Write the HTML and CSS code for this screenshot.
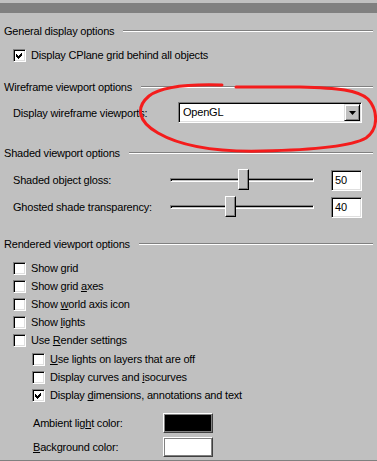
FILE: index.html
```html
<!DOCTYPE html>
<html lang="en">
    <head>
        <meta charset="UTF-8">
        <title>View options</title>
        <link rel="stylesheet" href="styles.css">
    </head>
    <body>
        <div class="panel">
            <div class="band"></div>

            <div class="group first"><span>General display options</span><i class="rule"></i></div>
            <div class="check cplane"><span class="box on"><svg width="9" height="9" viewBox="0 0 9 9"><polygon points="1,3 3,5 7,1 7,4 3,8 1,6"/></svg></span><span>Display CPlane grid behind all objects</span></div>

            <div class="group wire"><span>Wireframe viewport options</span><i class="rule"></i></div>
            <div class="combo-row">
                <span class="lbl">Display wireframe viewports:</span>
                <div class="combo"><span class="val">OpenGL</span><span class="drop"><svg width="7" height="4" viewBox="0 0 7 4"><polygon points="0,0 7,0 3.5,4"/></svg></span></div>
            </div>

            <div class="group shaded"><span>Shaded viewport options</span><i class="rule"></i></div>
            <div class="slider-row gloss">
                <span class="lbl">Shaded object gloss:</span>
                <div class="track"><span class="thumb" style="left:67px"></span></div>
                <span class="edit">50</span>
            </div>
            <div class="slider-row ghost">
                <span class="lbl">Ghosted shade transparency:</span>
                <div class="track"><span class="thumb" style="left:54px"></span></div>
                <span class="edit">40</span>
            </div>

            <div class="group rendered"><span>Rendered viewport options</span><i class="rule"></i></div>
            <div class="check top"><span class="box"></span><span>Show grid</span></div>
            <div class="check"><span class="box"></span><span>Show grid <u>a</u>xes</span></div>
            <div class="check"><span class="box"></span><span>Show <u>w</u>orld axis icon</span></div>
            <div class="check"><span class="box"></span><span>Show <u>l</u>ights</span></div>
            <div class="check"><span class="box"></span><span>Use <u>R</u>ender settings</span></div>
            <div class="check sub first-sub"><span class="box"></span><span><u>U</u>se lights on layers that are off</span></div>
            <div class="check sub"><span class="box"></span><span>Display curves and <u>i</u>socurves</span></div>
            <div class="check sub"><span class="box on"><svg width="9" height="9" viewBox="0 0 9 9"><polygon points="1,3 3,5 7,1 7,4 3,8 1,6"/></svg></span><span>Display <u>d</u>imensions, annotations and text</span></div>

            <div class="color-row ambient"><span class="lbl">Ambient lig<u>h</u>t color:</span><span class="swatch black"></span></div>
            <div class="color-row bg"><span class="lbl"><u>B</u>ackground color:</span><span class="swatch white"></span></div>
            <div class="bottom"></div>

            <!-- hand drawn marker round the combo -->
            <svg class="ring" width="377" height="461" viewBox="0 0 377 461">
                <path d="M222 85 C190 84 162 86 149 96 C136 107 137 121 158 133 C184 148 220 152 262 151 C312 150 350 147 366 138 C379 129 378 110 368 99 C358 90 338 88 300 87 L236 87"/>
            </svg>
        </div>
    </body>
</html>
```

FILE: styles.css
```css
body {
    margin: 0;
    background-color: #c0c0c0;
    font: 11px "Liberation Sans", Arial, sans-serif;
    letter-spacing: -0.2px;
    color: #000;
}
.panel {
    position: relative;
    width: 377px;
    height: 461px;
    display: flex;
    flex-direction: column;
    overflow: hidden;
}
.band {
    height: 10px;
    margin-top: 3px;
    background: #808080;
}
u {
    text-decoration-skip-ink: none;
}

/* group titles with etched line */
.group {
    display: flex;
    align-items: center;
    height: 14px;
    padding: 0 4px;
    white-space: nowrap;
}
.group .rule {
    flex: 1;
    margin-left: 9px;
    border-top: 1px solid #808080;
    border-bottom: 1px solid #fff;
}
.group.first { margin-top: 11px; }
.group.wire { margin-top: 16px; }
.group.shaded { margin-top: 23px; }
.group.rendered { margin-top: 19px; }

/* checkboxes */
.check {
    display: flex;
    align-items: center;
    gap: 5px;
    height: 18px;
    padding-left: 13px;
    white-space: nowrap;
}
.check.sub { padding-left: 32px; }
.check.cplane { margin-top: 8px; }
.check.top { margin-top: 8px; }
.check.first-sub { margin-top: 1px; }
.box {
    display: flex;
    align-items: center;
    justify-content: center;
    width: 13px;
    height: 13px;
    box-sizing: border-box;
    flex: none;
    background: #fff;
    border: 1px solid;
    border-color: #808080 #fff #fff #808080;
    box-shadow: inset 1px 1px 0 #000, inset -1px -1px 0 #dfdfdf;
}
.box svg {
    display: block;
    shape-rendering: crispEdges;
}

/* combo box */
.combo-row {
    display: flex;
    align-items: center;
    height: 21px;
    margin-top: 8px;
    padding-left: 13px;
}
.combo-row .lbl {
    width: 165px;
    white-space: nowrap;
}
.combo {
    display: flex;
    width: 184px;
    height: 21px;
    box-sizing: border-box;
    background: #fff;
    border: 1px solid;
    border-color: #808080 #fff #fff #808080;
    box-shadow: inset 1px 1px 0 #000, inset -1px -1px 0 #dfdfdf;
    padding: 1px;
}
.combo .val {
    flex: 1;
    padding-left: 3px;
    line-height: 17px;
}
.drop {
    display: flex;
    align-items: center;
    justify-content: center;
    width: 16px;
    height: 17px;
    box-sizing: border-box;
    background: #c0c0c0;
    border: 1px solid;
    border-color: #dfdfdf #000 #000 #dfdfdf;
    box-shadow: inset 1px 1px 0 #fff, inset -1px -1px 0 #808080;
}
.drop svg { display: block; }

/* sliders */
.slider-row {
    display: flex;
    align-items: center;
    height: 22px;
    padding-left: 13px;
}
.slider-row.gloss { margin-top: 9px; }
.slider-row.ghost { margin-top: 5px; }
.slider-row .lbl {
    width: 157px;
    white-space: nowrap;
}
.track {
    position: relative;
    width: 144px;
    height: 4px;
    box-sizing: border-box;
    border: 1px solid;
    border-color: #808080 #fff #fff #808080;
    box-shadow: inset 1px 1px 0 #000;
}
.thumb {
    position: absolute;
    top: -10px;
    width: 11px;
    height: 21px;
    box-sizing: border-box;
    background: #c0c0c0;
    border: 1px solid;
    border-color: #fff #000 #000 #fff;
    box-shadow: inset -1px -1px 0 #808080;
}
.edit {
    width: 31px;
    height: 21px;
    margin-left: 17px;
    box-sizing: border-box;
    background: #fff;
    border: 1px solid;
    border-color: #808080 #fff #fff #808080;
    box-shadow: inset 1px 1px 0 #000, inset -1px -1px 0 #dfdfdf;
    padding-left: 3px;
    line-height: 19px;
}

/* colour pickers */
.color-row {
    display: flex;
    align-items: center;
    height: 20px;
    padding-left: 33px;
}
.color-row.ambient { margin-top: 9px; }
.color-row.bg { margin-top: 4px; }
.color-row .lbl { width: 130px; }
.swatch {
    width: 50px;
    height: 20px;
    box-sizing: border-box;
    border: 1px solid;
    border-color: #fff #404040 #404040 #fff;
    box-shadow: inset 1px 1px 0 #808080, inset -1px -1px 0 #808080;
}
.swatch.black { background: #000; }
.swatch.white { background: #fff; }

.bottom {
    margin-top: 3px;
    height: 1px;
    background: #808080;
}

.ring {
    position: absolute;
    top: 0;
    left: 0;
    pointer-events: none;
}
.ring path {
    fill: none;
    stroke: #f41c1c;
    stroke-width: 3;
    stroke-linecap: round;
}
```
